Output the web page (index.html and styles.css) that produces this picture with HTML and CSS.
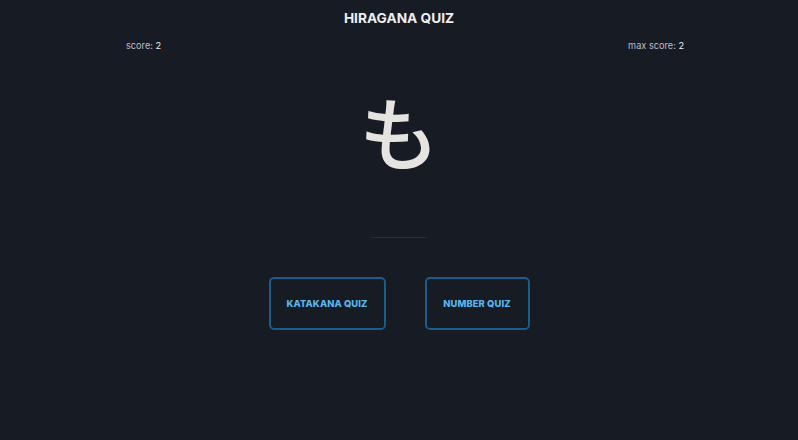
FILE: index.html
```html
<!DOCTYPE html>
<html>
<head>
<meta charset="utf-8">
<link rel="stylesheet" href="styles.css">
</head>
<body>
<div class="app">
  <h1 class="title">HIRAGANA QUIZ</h1>
  <div class="scores">
    <span class="score">score: <b>2</b></span>
    <span class="score">max score: <b>2</b></span>
  </div>
  <div class="kana">も</div>
  <div class="answer"><input class="answer-input" type="text"></div>
  <div class="buttons">
    <button class="btn btn-kata">KATAKANA QUIZ</button>
    <button class="btn btn-num">NUMBER QUIZ</button>
  </div>
</div>
</body>
</html>
```
FILE: styles.css
```css
html, body {
  margin: 0;
  padding: 0;
  background: #171b24;
  height: 100%;
}
body {
  font-family: Inter, "Noto Sans", sans-serif;
  color: #e4e4e4;
}
.app {
  display: flex;
  flex-direction: column;
  align-items: center;
}
.title {
  margin: 9px 0 0;
  font-size: 13.7px;
  font-weight: 700;
  line-height: 18px;
  color: #eeeeee;
}
.scores {
  width: 558px;
  margin-left: 12px;
  margin-top: 12px;
  display: flex;
  justify-content: space-between;
  font-size: 9.2px;
  line-height: 14px;
  color: #b9bec8;
}
.score b {
  font-weight: 400;
  color: #f2f2f2;
}
.kana {
  margin-top: 26px;
  font-family: "Noto Sans CJK JP", sans-serif;
  font-size: 80px;
  line-height: 100px;
  color: #e6e4e0;
  font-weight: 500;
}
.answer {
  margin-top: 42px;
}
.answer-input {
  display: block;
  width: 56px;
  height: 16px;
  padding: 0;
  background: transparent;
  border: none;
  border-bottom: 1px solid #2a2f38;
  outline: none;
}
.buttons {
  margin-top: 39px;
  display: flex;
  gap: 39px;
}
.btn {
  box-sizing: border-box;
  height: 53px;
  background: transparent;
  border: 2px solid #1a5c8a;
  border-radius: 5px;
  color: #5ab6ec;
  font-family: Inter, "Noto Sans", sans-serif;
  font-weight: 800;
  font-size: 9.4px;
  letter-spacing: 0.1px;
  padding: 0;
}
.btn-kata { width: 117px; }
.btn-num { width: 105px; }
```
